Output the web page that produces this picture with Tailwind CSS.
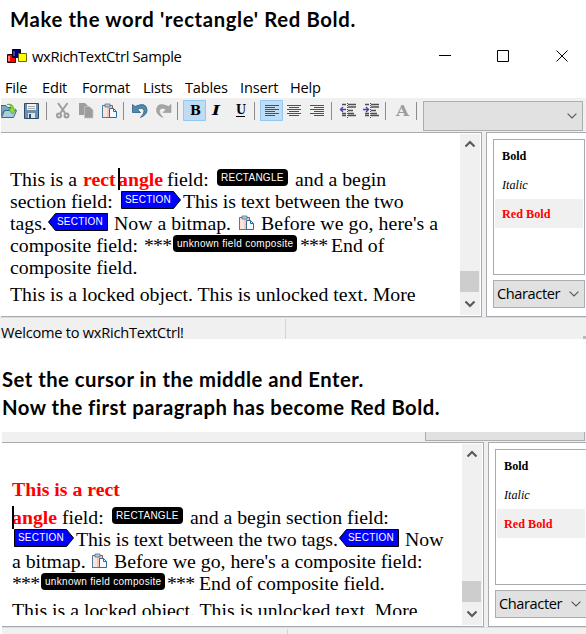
<!DOCTYPE html>
<html lang="en">
<head>
<meta charset="utf-8">
<title>wxRichTextCtrl Sample</title>
<script src="https://cdn.jsdelivr.net/npm/@tailwindcss/browser@4"></script>
</head>
<body class="bg-white">
<svg class="hidden">
  <symbol id="paste" viewBox="0 0 16 16">
    <path d="M1.5 2.5h10v12h-10z" fill="#f7c9b4" stroke="#a8573c"/>
    <path d="M2 3h4v11H2z" fill="#fff" opacity=".5"/>
    <path d="M1.5 15V3" stroke="#4a7da3"/><path d="M1 14.5h9" stroke="#4a7da3"/>
    <path d="M4 1h5v3H4z" fill="#b9cbd8" stroke="#52728a" stroke-width=".8"/>
    <path d="M8.5 5.5h4l3 3v6h-7z" fill="#f4faff" stroke="#2c6c9c"/>
    <path d="M12.500 5.500v3h3" fill="none" stroke="#2c6c9c"/>
  </symbol>
  <symbol id="up" viewBox="0 0 12 8"><path d="M1.500 6.500L6 2l4.500 4.500" fill="none" stroke="#5a5a5a" stroke-width="2.200"/></symbol>
  <symbol id="down" viewBox="0 0 12 8"><path d="M1.500 1.500L6 6l4.500-4.500" fill="none" stroke="#5a5a5a" stroke-width="2.200"/></symbol>
  <symbol id="chev" viewBox="0 0 10 6"><path d="M.6.600L5 5 9.400.600" fill="none" stroke="#555" stroke-width="1.100"/></symbol>
  <symbol id="begin" viewBox="0 0 60 18"><path d="M.5.500h52L59.500 9l-7 8.500H.5z" fill="#00f" stroke="#000"/></symbol>
  <symbol id="end" viewBox="0 0 60 18"><path d="M59.500.500h-52L.5 9l7 8.500h52z" fill="#00f" stroke="#000"/></symbol>
</svg>
<main class="flex h-[634px] w-[586px] flex-col overflow-hidden font-['Open_Sans',sans-serif] text-black">
  <h1 class="h-[40px] shrink-0 whitespace-nowrap pl-[10px] pt-[5px] font-['Lato',sans-serif] text-[20.300px] font-bold leading-[28px] tracking-[0.63px]">Make the word 'rectangle' Red Bold.</h1>

  <header class="flex h-[37px] shrink-0 items-start">
    <svg class="ml-[7px] mt-[9px] h-[14px] w-[20px]" viewBox="0 0 20 14"><path d="M.5 5.500h8v8h-8z" fill="red" stroke="#300"/><path d="M2 7v5" stroke="#fff"/><path d="M5.500.500h8v8h-8z" fill="#000080" stroke="#000"/><path d="M7 2v5" stroke="#88c"/><path d="M11.500 4.500h8v8h-8z" fill="#ff0" stroke="#660"/></svg>
    <span class="ml-[5px] mt-[4px] w-[404px] whitespace-nowrap text-[14.800px] leading-[24px] tracking-[-0.36px]">wxRichTextCtrl Sample</span>
    <svg class="mt-[9px] h-[14px] w-[145px]" viewBox="0 0 145 14" fill="none" stroke="#000"><path d="M3 6.500h12M61.500 1.500h11v11h-11zM120.500 1.500l11 11M131.500 1.500l-11 11"/></svg>
  </header>

  <nav class="flex h-[21px] shrink-0 whitespace-nowrap pl-[5px] text-[14.600px] leading-[20px] tracking-[-0.2px]">
    <span class="w-[37px]">File</span><span class="w-[40px]">Edit</span><span class="w-[61px]">Format</span><span class="w-[42px]">Lists</span><span class="w-[55px]">Tables</span><span class="w-[50px]">Insert</span><span>Help</span>
  </nav>

  <div class="ml-px flex h-[34px] shrink-0 items-start bg-[#f0f0f0]">
    <svg class="mt-[2px] h-[22px] w-[422px] shrink-0" viewBox="1 100 422 22" fill="none">
      <path d="M1 105.500h5l1.500 2h5v3H4L1 116z" fill="#78a9c4" stroke="#376a86"/><path d="M4.500 110.500h12l-3 7H1.500z" fill="#a8cde0" stroke="#376a86"/><path d="M7 104.500q4-1 4 4.500h-2.500l4 5 3.500-5h-2.500q0-6-6.500-4.500" fill="#8fdf2e" stroke="#4d9b2d" stroke-width=".7"/>
      <path d="M24.500 103.500h14v15h-14z" fill="#6e8fae" stroke="#294c6b"/><path d="M27 104h9v6h-9z" fill="#f2f2f2"/><path d="M28 106.500h7M28 108.500h7" stroke="#aaa"/><path d="M28 113h7v5h-7z" fill="#e4e4e4"/><path d="M29 114h2v4h-2z" fill="#294c6b"/>
      <path d="M46.500 102v18M123.500 102v18M177.500 102v18M254.500 102v18M331.500 102v18M385.500 102v18M416.500 102v18" stroke="#8c8c8c"/>
      <g stroke="#9d9d9d" stroke-width="2"><path d="M58 103l7 10M67.500 103l-7 10"/><circle cx="59" cy="115.500" r="2"/><circle cx="66.500" cy="115.500" r="2"/></g>
      <path d="M79 103h6l3 3v9h-9z" fill="#9d9d9d"/><path d="M84.500 106.500h5l3.500 3.500v8h-8.500z" fill="#9d9d9d" stroke="#c8c8c8" stroke-width=".7"/>
      <use href="#paste" x="101" y="103" width="16" height="16"/>
      <path d="M132.500 104.500v8h8l-3-3q5-3 6.500 1 .5 3-3.500 7 7-3 6.500-8-1-8-12-3z" fill="#5688aa" stroke="#285f86" stroke-width=".8"/>
      <path d="M171 104.500v8h-8l3-3q-5-3-6.500 1-.5 3 3.500 7-7-3-6.500-8 1-8 12-3z" fill="#a5a5a5" stroke="#999" stroke-width=".6"/>
      <path d="M183.500 100.500h22v20h-22zM260.500 100.500h22v20h-22z" fill="#c0dcf3" stroke="#90c8f6"/>
      <g fill="#000" font-family="'DejaVu Serif',serif" font-size="13" font-weight="bold"><text x="190" y="115" textLength="11" lengthAdjust="spacingAndGlyphs">B</text><text x="212" y="115" font-style="italic" textLength="8" lengthAdjust="spacingAndGlyphs">I</text><text x="236" y="114" font-size="12" textLength="10" lengthAdjust="spacingAndGlyphs">U</text><text x="396" y="116" font-size="15" fill="#9d9d9d" textLength="13" lengthAdjust="spacingAndGlyphs">A</text></g>
      <path d="M236 116.500h9" stroke="#000"/>
      <path d="M265 105.500h14M265 107.500h10M265 109.500h14M265 111.500h10M265 113.500h14M265 115.500h10M287 105.500h14M289 107.500h10M287 109.500h14M289 111.500h10M287 113.500h14M289 115.500h10M310 105.500h14M314 107.500h10M310 109.500h14M314 111.500h10M310 113.500h14M314 115.500h10" stroke="#505050"/>
      <path d="M342 104.500h4M348 104.500h8M342 113.500h4M348 113.500h6M348 107h8M348 110.500h5M342 115.500h4M348 115.500h8M365 104.500h4M371 104.500h8M365 113.500h4M371 113.500h6M371 107h8M371 110.500h5M365 115.500h4M371 115.500h8" stroke="#505050" stroke-width="1.300"/><path d="M347.500 103v15M370.500 103v15" stroke="#505050" stroke-dasharray="1 1"/>
      <path d="M340 109.500h6M343 107l-2.500 2.500 2.500 2.500M363 109.500h6M366 107l2.500 2.500-2.500 2.500" stroke="#4545a8" stroke-width="1.300"/>
    </svg>
    <div class="mt-[3px] flex h-[30px] w-[160px] items-center justify-end border border-[#adadad] bg-[#e1e1e1] pr-[5px]"><svg class="h-[6px] w-[10px]"><use href="#chev"/></svg></div>
  </div>

  <section class="ml-px flex h-[185px] shrink-0 bg-[#f0f0f0] font-['Liberation_Serif',serif]">
    <div class="flex w-[481px] border-y border-r border-[#a9a9b0] bg-white">
      <div class="w-[459px] whitespace-nowrap pl-[9px] pt-[35px] text-[19.800px] leading-[22px]">
        <div class="flex h-[22px]"><span class="w-[73px]">This is a</span><b class="w-[35px] text-[#f00]">rect</b><i class="z-10 -mr-[2px] w-[2px] bg-black"></i><b class="w-[49px] text-[#f00]">angle</b><span class="w-[40px]">field:</span><span class="ml-[10px] mt-px h-[17px] w-[71px] rounded-[4px] bg-black pl-[4px] font-['Liberation_Sans',sans-serif] text-[10px] leading-[17px] tracking-[0.25px] text-white">RECTANGLE</span><span class="ml-[7px]">and a begin</span></div>
        <div class="flex h-[22px]"><span class="w-[111px]">section field:</span><span class="relative mt-px h-[18px] w-[60px] pl-[4px] font-['Liberation_Sans',sans-serif] text-[10px] leading-[17px] tracking-[0.2px] text-white"><svg class="absolute left-0 top-0 h-[18px] w-[60px]"><use href="#begin"/></svg><span class="relative">SECTION</span></span><span class="ml-[2px] tracking-[-0.07px]">This is text between the two</span></div>
        <div class="flex h-[22px]"><span class="w-[38px]">tags.</span><span class="relative mt-px h-[18px] w-[60px] pl-[9px] font-['Liberation_Sans',sans-serif] text-[10px] leading-[17px] tracking-[0.2px] text-white"><svg class="absolute left-0 top-0 h-[18px] w-[60px]"><use href="#end"/></svg><span class="relative">SECTION</span></span><span class="ml-[6px] w-[124px]">Now a bitmap.</span><svg class="mt-[3px] h-[16px] w-[16px]"><use href="#paste"/></svg><span class="ml-[7px] tracking-[0.08px]">Before we go, here's a</span></div>
        <div class="flex h-[22px]"><span class="w-[134px]">composite field:</span><span class="w-[29px] tracking-[-0.8px]">***</span><span class="mt-px h-[17px] w-[124px] rounded-[4px] bg-black pl-[4px] font-['Liberation_Sans',sans-serif] text-[10px] leading-[17px] tracking-[0.3px] text-white">unknown field composite</span><span class="ml-[3px] w-[31px] tracking-[-0.8px]">***</span><span>End of</span></div>
        <div class="h-[27px]">composite field.</div>
        <div>This is a locked object. This is unlocked text. More</div>
      </div>
      <div class="my-px flex w-[20px] flex-col items-center bg-[#f0f0f0] pt-[6px]"><svg class="h-[8px] w-[12px]"><use href="#up"/></svg><span class="mr-px mt-[123px] h-[21px] w-[19px] bg-[#cdcdcd]"></span><svg class="mt-[8px] h-[8px] w-[12px]"><use href="#down"/></svg></div>
    </div>
    <div class="ml-[4px] w-[100px] border-y border-l border-[#a9a9b0] bg-white pl-[6px] pt-[6px]">
      <div class="h-[136px] w-[92px] whitespace-nowrap border border-[#a9a9b0] p-px text-[12.200px] leading-[30px]"><div class="h-[29px] pl-[7px] font-bold">Bold</div><div class="h-[29px] pl-[7px] italic">Italic</div><div class="h-[29px] bg-[#f0f0f0] pl-[7px] font-bold text-[#f00]">Red Bold</div></div>
      <div class="mt-[5px] flex h-[28px] w-[92px] items-center justify-between border border-[#adadad] bg-[#e1e1e1] pl-[3px] pr-[5px] font-['Open_Sans',sans-serif] text-[14.600px] tracking-[-0.4px]">Character<svg class="h-[6px] w-[10px]"><use href="#chev"/></svg></div>
    </div>
  </section>
  <footer class="flex h-[22px] shrink-0 border-t border-[#dcdcdc] bg-[#f0f0f0] text-[14.600px] leading-[27px] tracking-[-0.24px]"><span class="mt-px h-[20px] w-[286px] whitespace-nowrap border-r border-[#d4d4d4] pl-px">Welcome to wxRichTextCtrl!</span><i class="ml-auto mt-[18px] h-[3px] w-[3px] bg-[#bbb]"></i></footer>

  <h2 class="h-[93px] shrink-0 whitespace-nowrap pl-[2px] pt-[26px] font-['Lato',sans-serif] text-[20.300px] font-bold leading-[28px] tracking-[0.47px]">Set the cursor in the middle and Enter.<br>Now the first paragraph has become Red Bold.</h2>

  <div class="ml-[2px] h-[10px] shrink-0 bg-[#f0f0f0] pl-[423px]"><div class="h-[9px] w-[160px] border border-t-0 border-[#adadad] bg-[#e1e1e1]"></div></div>
  <section class="ml-[2px] flex h-[185px] shrink-0 bg-[#f0f0f0] font-['Liberation_Serif',serif]">
    <div class="flex w-[482px] border-y border-r border-[#a9a9b0] bg-white">
      <div class="h-[172px] w-[460px] overflow-hidden whitespace-nowrap pl-[10px] pt-[35px] text-[19.800px] leading-[22px]">
        <div class="h-[28px] font-bold text-[#f00]">This is a rect</div>
        <div class="flex h-[22px]"><i class="z-10 -mr-[2px] h-[23px] w-[2px] shrink-0 bg-black"></i><b class="w-[50px] text-[#f00]">angle</b><span class="w-[50px]">field:</span><span class="mt-px h-[17px] w-[71px] rounded-[4px] bg-black pl-[4px] font-['Liberation_Sans',sans-serif] text-[10px] leading-[17px] tracking-[0.25px] text-white">RECTANGLE</span><span class="ml-[7px]">and a begin section field:</span></div>
        <div class="flex h-[22px]"><span class="relative ml-[2px] mt-px h-[18px] w-[60px] pl-[4px] font-['Liberation_Sans',sans-serif] text-[10px] leading-[17px] tracking-[0.2px] text-white"><svg class="absolute left-0 top-0 h-[18px] w-[60px]"><use href="#begin"/></svg><span class="relative">SECTION</span></span><span class="ml-[2px] w-[263px] tracking-[-0.07px]">This is text between the two tags.</span><span class="relative mt-px h-[18px] w-[60px] pl-[9px] font-['Liberation_Sans',sans-serif] text-[10px] leading-[17px] tracking-[0.2px] text-white"><svg class="absolute left-0 top-0 h-[18px] w-[60px]"><use href="#end"/></svg><span class="relative">SECTION</span></span><span class="ml-[6px]">Now</span></div>
        <div class="flex h-[22px]"><span class="w-[79px]">a bitmap.</span><svg class="mt-[3px] h-[16px] w-[16px]"><use href="#paste"/></svg><span class="ml-[7px]">Before we go, here's a composite field:</span></div>
        <div class="flex h-[27px]"><span class="w-[29px] tracking-[-0.8px]">***</span><span class="mt-px h-[17px] w-[124px] rounded-[4px] bg-black pl-[4px] font-['Liberation_Sans',sans-serif] text-[10px] leading-[17px] tracking-[0.3px] text-white">unknown field composite</span><span class="ml-[2px] w-[32px] tracking-[-0.8px]">***</span><span>End of composite field.</span></div>
        <div>This is a locked object. This is unlocked text. More</div>
      </div>
      <div class="my-px flex w-[20px] flex-col items-center bg-[#f0f0f0] pt-[6px]"><svg class="h-[8px] w-[12px]"><use href="#up"/></svg><span class="mr-px mt-[123px] h-[21px] w-[19px] bg-[#cdcdcd]"></span><svg class="mt-[8px] h-[8px] w-[12px]"><use href="#down"/></svg></div>
    </div>
    <div class="ml-[4px] w-[98px] overflow-hidden border-y border-l border-[#a9a9b0] bg-white pl-[6px] pt-[6px]">
      <div class="h-[136px] w-[92px] whitespace-nowrap border border-[#a9a9b0] p-px text-[12.200px] leading-[30px]"><div class="h-[29px] pl-[7px] font-bold">Bold</div><div class="h-[29px] pl-[7px] italic">Italic</div><div class="h-[29px] bg-[#f0f0f0] pl-[7px] font-bold text-[#f00]">Red Bold</div></div>
      <div class="mt-[5px] flex h-[28px] w-[92px] items-center justify-between border border-[#adadad] bg-[#e1e1e1] pl-[3px] pr-[5px] font-['Open_Sans',sans-serif] text-[14.600px] tracking-[-0.4px]">Character<svg class="h-[6px] w-[10px]"><use href="#chev"/></svg></div>
    </div>
  </section>
  <footer class="ml-[2px] h-[7px] shrink-0 border-t border-[#dcdcdc] bg-[#f0f0f0] pt-px"><div class="h-[5px] w-[286px] border-r border-[#d4d4d4]"></div></footer>
</main>
</body>
</html>
